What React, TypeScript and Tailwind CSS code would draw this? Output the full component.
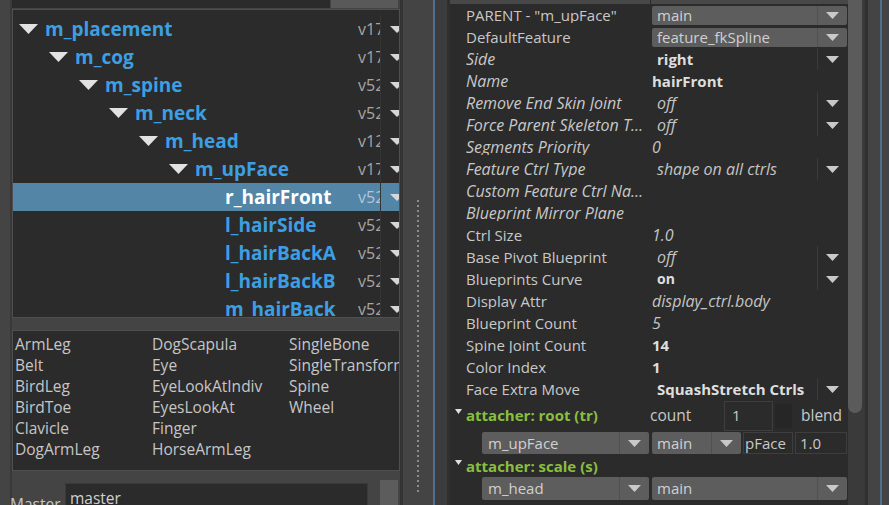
import React from 'react';

interface TreeRow {
  name: string;
  level: number;
  ver: string;
  branch?: boolean;
  selected?: boolean;
}

interface PropRow {
  label: string;
  italicLabel?: boolean;
  value?: string;
  valueStyle?: 'italic' | 'bold' | 'boldSmall';
  kind: 'combo' | 'drop' | 'plain';
}

const treeRows: TreeRow[] = [
  { name: 'm_placement', level: 0, ver: 'v17', branch: true },
  { name: 'm_cog', level: 1, ver: 'v17', branch: true },
  { name: 'm_spine', level: 2, ver: 'v52', branch: true },
  { name: 'm_neck', level: 3, ver: 'v52', branch: true },
  { name: 'm_head', level: 4, ver: 'v12', branch: true },
  { name: 'm_upFace', level: 5, ver: 'v17', branch: true },
  { name: 'r_hairFront', level: 6, ver: 'v52', selected: true },
  { name: 'l_hairSide', level: 6, ver: 'v52' },
  { name: 'l_hairBackA', level: 6, ver: 'v52' },
  { name: 'l_hairBackB', level: 6, ver: 'v52' },
  { name: 'm_hairBack', level: 6, ver: 'v52' },
];

const modules = [
  'ArmLeg', 'Belt', 'BirdLeg', 'BirdToe', 'Clavicle', 'DogArmLeg',
  'DogScapula', 'Eye', 'EyeLookAtIndiv', 'EyesLookAt', 'Finger', 'HorseArmLeg',
  'SingleBone', 'SingleTransform', 'Spine', 'Wheel',
];

const props: PropRow[] = [
  { label: 'PARENT - "m_upFace"', value: 'main', kind: 'combo' },
  { label: 'DefaultFeature', value: 'feature_fkSpline', kind: 'combo' },
  { label: 'Side', italicLabel: true, value: 'right', valueStyle: 'bold', kind: 'drop' },
  { label: 'Name', italicLabel: true, value: 'hairFront', valueStyle: 'bold', kind: 'plain' },
  { label: 'Remove End Skin Joint', italicLabel: true, value: 'off', valueStyle: 'italic', kind: 'drop' },
  { label: 'Force Parent Skeleton To Root', italicLabel: true, value: 'off', valueStyle: 'italic', kind: 'drop' },
  { label: 'Segments Priority', italicLabel: true, value: '0', valueStyle: 'italic', kind: 'plain' },
  { label: 'Feature Ctrl Type', italicLabel: true, value: 'shape on all ctrls', valueStyle: 'italic', kind: 'drop' },
  { label: 'Custom Feature Ctrl Names', italicLabel: true, kind: 'plain' },
  { label: 'Blueprint Mirror Plane', italicLabel: true, kind: 'plain' },
  { label: 'Ctrl Size', value: '1.0', valueStyle: 'italic', kind: 'plain' },
  { label: 'Base Pivot Blueprint', value: 'off', valueStyle: 'italic', kind: 'drop' },
  { label: 'Blueprints Curve', value: 'on', valueStyle: 'boldSmall', kind: 'drop' },
  { label: 'Display Attr', value: 'display_ctrl.body', valueStyle: 'italic', kind: 'plain' },
  { label: 'Blueprint Count', value: '5', valueStyle: 'italic', kind: 'plain' },
  { label: 'Spine Joint Count', value: '14', valueStyle: 'bold', kind: 'plain' },
  { label: 'Color Index', value: '1', valueStyle: 'bold', kind: 'plain' },
  { label: 'Face Extra Move', value: 'SquashStretch Ctrls', valueStyle: 'bold', kind: 'drop' },
];

function Tri({ w, h, className }: { w: number; h: number; className?: string }) {
  return (
    <svg width={w} height={h} viewBox={`0 0 ${w} ${h}`} className={`shrink-0 ${className ?? ''}`}>
      <path d={`M0 0H${w}L${w / 2} ${h}Z`} fill="currentColor" />
    </svg>
  );
}

function valueClass(style?: PropRow['valueStyle']) {
  if (style === 'bold') return 'font-bold text-[#dedede]';
  if (style === 'boldSmall') return 'font-bold text-[14px] text-[#dedede]';
  return 'italic text-[16px] text-[#c4c4c4]';
}

function Combo({ text, className, pad }: { text: string; className: string; pad?: string }) {
  return (
    <div className={`flex shrink-0 rounded-[2px] bg-[#5d5d5d] ${className}`}>
      <div className={`flex flex-1 items-center leading-none text-[#d0d0d0] ${pad ?? 'pl-[5px]'}`}>{text}</div>
      <div className="w-[1px] bg-[#505050]" />
      <div className="flex w-[29px] items-center justify-center">
        <Tri w={13} h={7} className="text-[#c9c9c9]" />
      </div>
    </div>
  );
}

export default function App() {
  return (
    <div className="flex h-[505px] w-[889px] overflow-hidden bg-[#444444] font-['Open_Sans',sans-serif] text-[15px] text-[#c8c8c8]">
      {/* linke Spalte */}
      <div className="ml-[10px] flex w-[390px] shrink-0 flex-col border-l-2 border-[#393939]">
        <div className="flex h-[8px] shrink-0 pr-[2px]">
          <div className="w-[318px] bg-[#2b2b2b]" />
          <div className="ml-[1px] flex-1 bg-[#595959]" />
        </div>

        {/* Baum */}
        <div className="mt-[1px] h-[309px] shrink-0 overflow-hidden border border-[#4f4f4f] bg-[#2b2b2b] pt-[5px]">
          {treeRows.map((row) => (
            <div
              key={row.name}
              className={`flex h-[28px] items-center ${row.selected ? 'bg-[#5285a6]' : ''}`}
            >
              <div
                className="flex min-w-0 flex-1 items-center"
                style={{ paddingLeft: 6 + row.level * 30 }}
              >
                <div className="flex w-[26px] shrink-0 items-center">
                  {row.branch && <Tri w={19} h={10} className="text-[#e2e2e2]" />}
                </div>
                <span
                  className={`whitespace-nowrap text-[19px] font-bold leading-none ${
                    row.selected ? 'text-white' : 'text-[#3d9fe3]'
                  }`}
                >
                  {row.name}
                </span>
              </div>
              <div
                className={`w-[24px] shrink-0 overflow-hidden pl-[2px] text-[16px] whitespace-nowrap ${
                  row.selected ? 'text-[#b4c6d6]' : 'text-[#a6a6a6]'
                }`}
              >
                {row.ver}
              </div>
              <div className="h-full w-[1px] shrink-0 bg-[#353535]" />
              <div className="flex h-full w-[18px] shrink-0 items-center overflow-hidden pl-[9px]">
                <Tri w={14} h={7} className="text-[#d6d6d6]" />
              </div>
            </div>
          ))}
        </div>

        {/* Modulliste */}
        <div className="mt-[12px] h-[141px] shrink-0 overflow-hidden border border-[#4f4f4f] bg-[#2b2b2b] pl-[2px] pt-[3px]">
          <div className="grid grid-flow-col grid-rows-[repeat(6,21px)] auto-cols-[137px] text-[15.5px] text-[#c6c6c6]">
            {modules.map((m) => (
              <div key={m} className="flex items-center whitespace-nowrap">
                {m}
              </div>
            ))}
          </div>
        </div>

        <div className="mt-[12px] flex flex-1 items-start">
          <div className="-ml-[2px] mt-[10px] w-[55px] shrink-0 text-[15.5px] text-[#c6c6c6]">Master</div>
          <div className="h-[30px] w-[303px] shrink-0 border border-[#3a3a3a] bg-[#2b2b2b] pl-[4px] pt-[7px] text-[15.5px] leading-none text-[#d0d0d0]">
            master
          </div>
          <div className="ml-[12px] -mt-[3px] h-[30px] w-[18px] shrink-0 bg-[#5c5c5c]" />
        </div>
      </div>

      {/* Trenner */}
      <div className="flex w-[50px] shrink-0">
        <div className="w-[3px] bg-[#333333]" />
        <div className="flex w-[30px] flex-col pt-[200px]">
          <div className="ml-[14px] h-[292px] w-[2px] bg-[repeating-linear-gradient(to_bottom,#8c8c8c_0px,#8c8c8c_2px,transparent_2px,transparent_5px)]" />
        </div>
        <div className="w-[2px] bg-[#516f8c]" />
        <div className="w-[12px] bg-[#3c3c3c]" />
        <div className="w-[3px] bg-[#2f2f2f]" />
      </div>

      {/* Attribut-Editor */}
      <div className="flex w-[398px] shrink-0 flex-col bg-[#2b2b2b]">
        <div className="flex h-[4px] shrink-0">
          <div className="w-[200px] bg-[#484848]" />
          <div className="w-[1px] bg-[#2b2b2b]" />
          <div className="flex-1 bg-[#484848]" />
        </div>

        {props.map((p) => (
          <div key={p.label} className="flex h-[22px] shrink-0 items-center">
            <div
              className={`w-[202px] shrink-0 truncate pl-[16px] pr-[5px] leading-none ${
                p.italicLabel ? 'italic text-[16px]' : ''
              }`}
            >
              {p.label}
            </div>
            {p.kind === 'combo' && <Combo text={p.value ?? ''} className="h-[19px] w-[195px]" />}
            {p.kind === 'drop' && (
              <div className="flex h-full flex-1 items-stretch">
                <div className={`flex flex-1 items-center pl-[5px] leading-none ${valueClass(p.valueStyle)}`}>
                  {p.value}
                </div>
                <div className="w-[1px] bg-[#3a3a3a]" />
                <div className="flex w-[30px] items-center justify-center pr-[1px]">
                  <Tri w={13} h={7} className="text-[#c9c9c9]" />
                </div>
              </div>
            )}
            {p.kind === 'plain' && (
              <div className={`flex-1 leading-none ${valueClass(p.valueStyle)}`}>{p.value}</div>
            )}
          </div>
        ))}

        {/* attacher: root */}
        <div className="flex h-[31px] shrink-0 items-center">
          <div className="flex w-[200px] shrink-0 items-center pl-[5px]">
            <Tri w={7} h={5} className="-mt-[8px] text-[#e0e0e0]" />
            <span className="ml-[4px] font-bold text-[#89bf3e]">attacher: root (tr)</span>
          </div>
          <div className="w-[74px] shrink-0 text-[15.5px]">count</div>
          <div className="flex h-[30px] w-[49px] shrink-0 items-center border border-[#3e3e3e] bg-[#2b2b2b] pl-[7px]">
            1
          </div>
          <div className="ml-[2px] h-[24px] w-[17px] shrink-0 rounded-[2px] bg-[#262626]" />
          <div className="ml-[9px] text-[15.5px]">blend</div>
        </div>

        <div className="mt-[1px] flex h-[22px] shrink-0 items-stretch pl-[32px]">
          <Combo text="m_upFace" className="w-[167px]" pad="pl-[6px]" />
          <Combo text="main" className="ml-[3px] w-[89px]" />
          <div className="ml-[2px] flex w-[50px] shrink-0 items-center overflow-hidden border border-[#3e3e3e] pl-[1px] leading-none whitespace-nowrap">
            pFace
          </div>
          <div className="ml-[2px] flex w-[52px] shrink-0 items-center border border-[#3e3e3e] pl-[4px] leading-none">
            1.0
          </div>
        </div>

        {/* attacher: scale */}
        <div className="mt-[1px] flex h-[22px] shrink-0 items-center pl-[5px]">
          <Tri w={7} h={5} className="-mt-[8px] text-[#e0e0e0]" />
          <span className="ml-[4px] font-bold text-[#89bf3e]">attacher: scale (s)</span>
        </div>

        <div className="flex h-[23px] shrink-0 items-stretch pl-[32px]">
          <Combo text="m_head" className="w-[167px]" pad="pl-[6px]" />
          <Combo text="main" className="ml-[3px] w-[195px]" />
        </div>
      </div>

      {/* Scrollleiste und rechter Rand */}
      <div className="flex w-[17px] shrink-0 bg-[#3a3a3a]">
        <div className="h-[413px] w-[14px] rounded-b-[7px] bg-[#5b5b5b]" />
      </div>
      <div className="w-[3px] shrink-0 bg-[#303030]" />
      <div className="w-[12px] shrink-0 bg-[#444444]" />
      <div className="w-[2px] shrink-0 bg-[#516f8c]" />
      <div className="flex-1 bg-[#444444]" />
    </div>
  );
}
